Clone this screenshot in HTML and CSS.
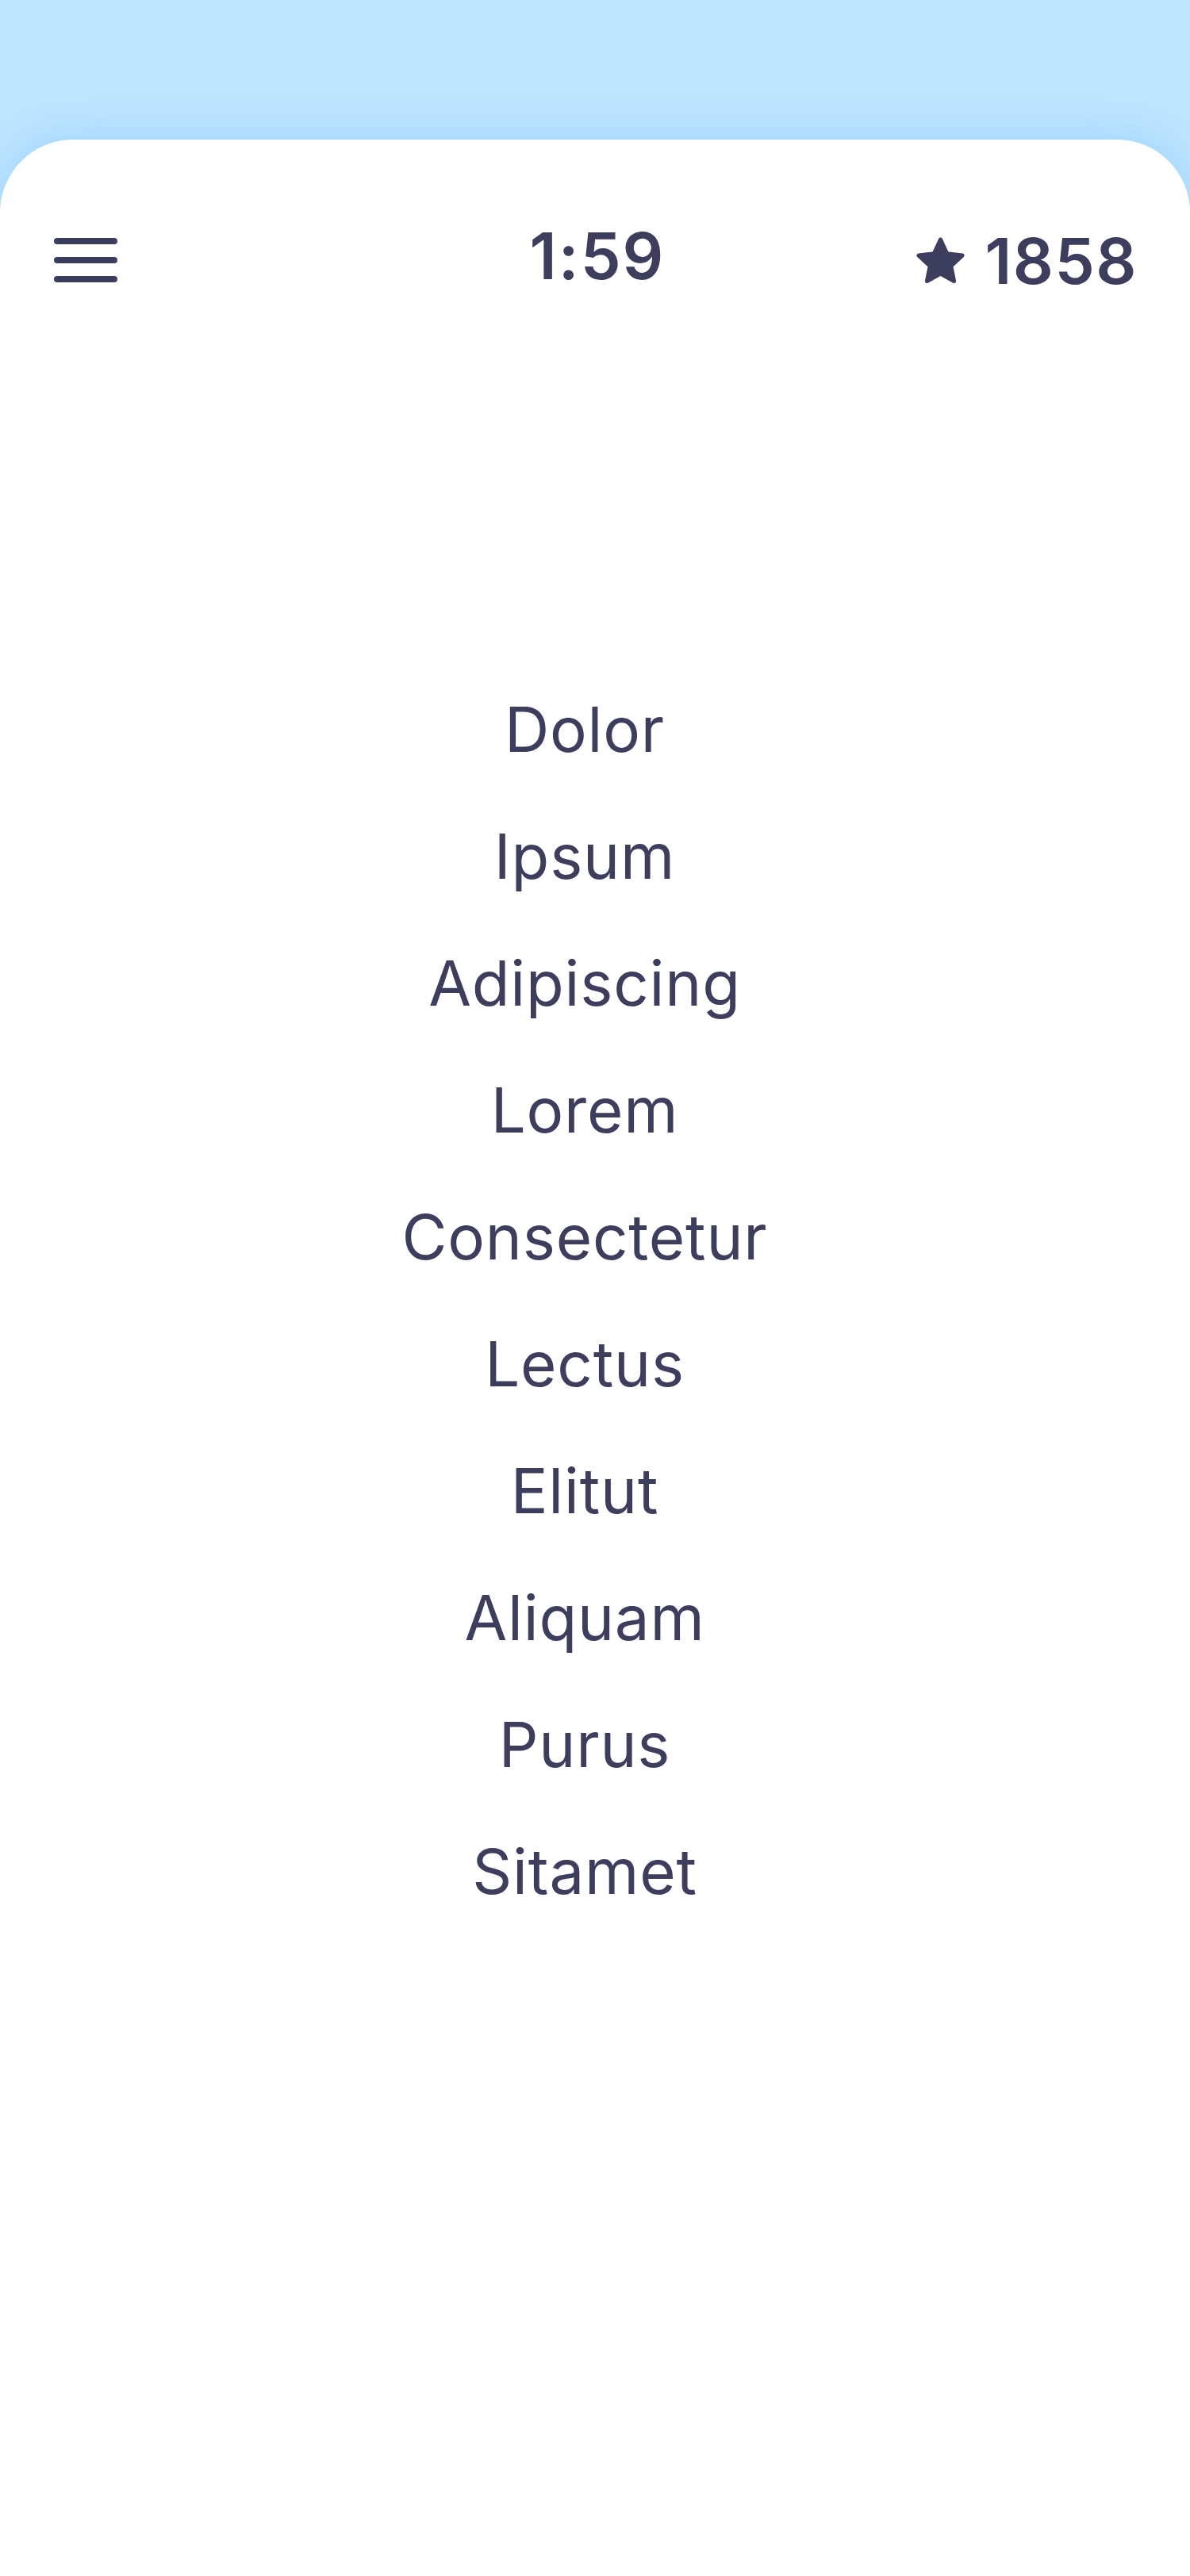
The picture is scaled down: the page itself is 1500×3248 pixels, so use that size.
FILE: index.html
```html
<!DOCTYPE html>
<html lang="en">
<head>
<meta charset="utf-8">
<title>Word list</title>
<link rel="stylesheet" href="styles.css">
</head>
<body>
<main class="card">
  <header class="topbar">
    <button class="menu" aria-label="Menu">
      <svg width="80" height="56" viewBox="0 0 80 56"><g stroke="#3d3d5e" stroke-width="8" stroke-linecap="round"><line x1="4" y1="4" x2="76" y2="4"/><line x1="4" y1="28" x2="76" y2="28"/><line x1="4" y1="52" x2="76" y2="52"/></g></svg>
    </button>
    <div class="timer">1:59</div>
    <div class="score">
      <svg class="star" width="63" height="58" viewBox="0 0 61 56"><polygon points="30.5,3 38.44,20.08 57.13,22.35 43.34,35.17 46.96,53.65 30.5,44.5 14.04,53.65 17.66,35.17 3.87,22.35 22.56,20.08" fill="#3d3d5e" stroke="#3d3d5e" stroke-width="5" stroke-linejoin="round"/></svg>
      <span class="points">1858</span>
    </div>
  </header>
  <ul class="words">
    <li>Dolor</li>
    <li>Ipsum</li>
    <li>Adipiscing</li>
    <li>Lorem</li>
    <li>Consectetur</li>
    <li>Lectus</li>
    <li>Elitut</li>
    <li>Aliquam</li>
    <li>Purus</li>
    <li>Sitamet</li>
  </ul>
</main>
</body>
</html>
```
FILE: styles.css
```css
html, body {
  margin: 0;
  padding: 0;
}
body {
  background: #bee5fe;
  font-family: Inter, "Noto Sans", sans-serif;
  color: #3d3d5e;
  padding-top: 176px;
  overflow: hidden;
}
.card {
  background: #ffffff;
  border-radius: 92px 92px 0 0;
  min-height: 3072px;
  box-shadow: 0 -2px 50px rgba(110, 190, 250, 0.45);
  padding-top: 92px;
  box-sizing: border-box;
}
.topbar {
  display: flex;
  align-items: center;
  justify-content: space-between;
  height: 120px;
  padding: 0 66px 0 68px;
  position: relative;
}
.menu {
  border: 0;
  background: none;
  padding: 0;
  margin: 0;
  display: flex;
}
.timer {
  position: absolute;
  left: 0;
  right: 0;
  text-align: center;
  font-size: 81px;
  font-weight: 600;
  letter-spacing: 2px;
  padding: 0 0 10px 6px;
  pointer-events: none;
}
.score {
  display: flex;
  align-items: center;
  gap: 24px;
}
.star {
  display: block;
}
.points {
  font-size: 80px;
  font-weight: 600;
  letter-spacing: 1.5px;
}
.words {
  list-style: none;
  margin: 452px 0 0;
  padding: 0 26px 0 0;
  text-align: center;
}
.words li {
  font-size: 78px;
  line-height: 160px;
  font-weight: 400;
  letter-spacing: 0.8px;
}
```
